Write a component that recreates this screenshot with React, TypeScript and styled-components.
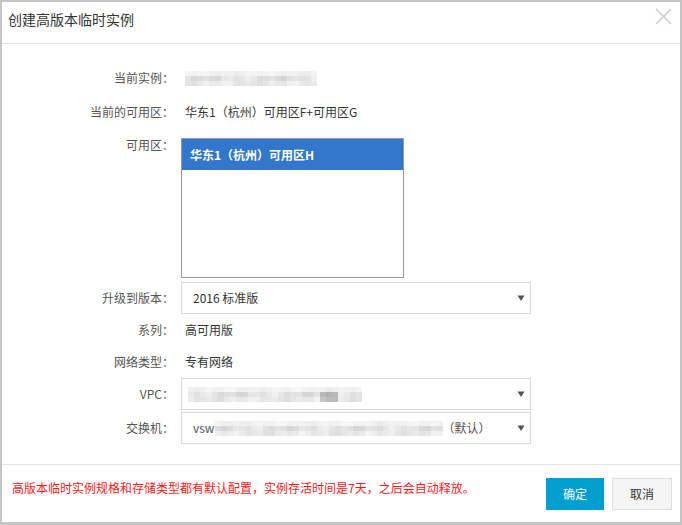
import styled, { createGlobalStyle } from "styled-components";

const GlobalStyle = createGlobalStyle`
    html, body {
        margin: 0;
        padding: 0;
        background: #fff;
    }
    body {
        font-family: "Noto Sans CJK SC", "Liberation Sans", sans-serif;
        font-size: 12px;
        color: #333;
    }
`;

// pixel shades for the masked (blurred) ids
const maskRow = (seed: number, n: number, base: number, spread: number) =>
    Array.from({ length: n }, (_, i) => {
        const v = (Math.sin(seed * 3.1 + i * 1.7) + Math.sin(seed + i * 0.53)) / 4 + 0.5;
        return Math.round(base + v * spread);
    });

function Mosaic({ cells, seed, dark }: { cells: number; seed: number; dark?: number[] }) {
    const rows = [
        maskRow(seed, cells, 236, 12),
        maskRow(seed + 2, cells, 212, 28),
        maskRow(seed + 4, cells, 222, 22),
    ];
    return <MosaicGrid $cells={cells}>
        {rows.flat().map((v, i) => {
            const col = i % cells;
            const shade = dark && dark.includes(col) && i >= cells ? v - 45 : v;
            return <MosaicCell key={i} style={{ background: `rgb(${shade},${shade},${shade})` }} />;
        })}
    </MosaicGrid>;
}

function Caret() {
    return <svg width="8" height="8" viewBox="0 0 8 8">
        <path d="M0.5 1.5 H7.5 L4 7 Z" fill="#555" />
    </svg>;
}

function CloseIcon() {
    return <svg width="17" height="17" viewBox="0 0 17 17">
        <path d="M1 1 L16 16 M16 1 L1 16" stroke="#c9c9c9" strokeWidth="1.4" />
    </svg>;
}

export default function App() {
    return <>
        <GlobalStyle />
        <Dialog>
            <Header>
                <Title>创建高版本临时实例</Title>
                <CloseButton><CloseIcon /></CloseButton>
            </Header>
            <Body>
                <Row $h={32}>
                    <Label>当前实例：</Label>
                    <Value><Mosaic cells={22} seed={1} /></Value>
                </Row>
                <Row $h={32} $mt={2}>
                    <Label>当前的可用区：</Label>
                    <Value>华东1（杭州）可用区F+可用区G</Value>
                </Row>
                <Row $h={140} $mt={10} $top>
                    <Label $top>可用区：</Label>
                    <ListBox>
                        <Option $selected>华东1（杭州）可用区H</Option>
                    </ListBox>
                </Row>
                <Row $h={32} $mt={4}>
                    <Label>升级到版本：</Label>
                    <Select>
                        <SelectText>2016 标准版</SelectText>
                        <Caret />
                    </Select>
                </Row>
                <Row $h={32}>
                    <Label>系列：</Label>
                    <Value>高可用版</Value>
                </Row>
                <Row $h={32}>
                    <Label>网络类型：</Label>
                    <Value>专有网络</Value>
                </Row>
                <Row $h={32}>
                    <Label>VPC：</Label>
                    <Select>
                        <SelectText $pad={6}><Mosaic cells={29} seed={5} dark={[22, 23, 24]} /></SelectText>
                        <Caret />
                    </Select>
                </Row>
                <Row $h={32} $mt={2}>
                    <Label>交换机：</Label>
                    <Select>
                        <SelectText>
                            <Small>vsw</Small>
                            <Mosaic cells={38} seed={9} />
                            <Small>（默认）</Small>
                        </SelectText>
                        <Caret />
                    </Select>
                </Row>
            </Body>
            <Footer>
                <Notice>高版本临时实例规格和存储类型都有默认配置，实例存活时间是7天，之后会自动释放。</Notice>
                <Buttons>
                    <Button $primary>确定</Button>
                    <Button>取消</Button>
                </Buttons>
            </Footer>
        </Dialog>
    </>;
}

const Dialog = styled.div`
    display: flex;
    flex-direction: column;
    box-sizing: border-box;
    width: 682px;
    height: 525px;
    border: 2px solid #c4c4c4;
    border-bottom-width: 3px;
    background: #fff;
`;

const Header = styled.div`
    display: flex;
    align-items: flex-start;
    justify-content: space-between;
    height: 41px;
    border-bottom: 1px solid #e3e3e3;
    padding: 0 8px 0 6px;
`;

const Title = styled.div`
    padding-top: 8px;
    font-size: 14px;
    line-height: 18px;
    color: #333;
`;

const CloseButton = styled.div`
    padding-top: 6px;
    line-height: 0;
`;

const Body = styled.div`
    flex: 1;
    display: flex;
    flex-direction: column;
    padding-top: 18px;
`;

const Row = styled.div<{ $h: number; $mt?: number; $top?: boolean }>`
    display: flex;
    align-items: ${p => (p.$top ? "flex-start" : "center")};
    gap: 7px;
    height: ${p => p.$h}px;
    margin-top: ${p => p.$mt ?? 0}px;
`;

const Label = styled.div<{ $top?: boolean }>`
    width: 172px;
    flex-shrink: 0;
    text-align: right;
    color: #555;
    line-height: 16px;
    margin-top: ${p => (p.$top ? "-1px" : "0")};
`;

const Value = styled.div`
    display: flex;
    align-items: center;
    padding-left: 4px;
    color: #333;
    line-height: 16px;
`;

const MosaicGrid = styled.div<{ $cells: number }>`
    display: grid;
    grid-template-columns: repeat(${p => p.$cells}, 6px);
    grid-auto-rows: 5px;
`;

const MosaicCell = styled.span`
    display: block;
`;

const ListBox = styled.div`
    box-sizing: border-box;
    width: 223px;
    height: 140px;
    border: 1px solid #999;
    background: #fff;
`;

const Option = styled.div<{ $selected?: boolean }>`
    height: 31px;
    line-height: 31px;
    padding-left: 8px;
    font-weight: ${p => (p.$selected ? 700 : 400)};
    color: ${p => (p.$selected ? "#fff" : "#333")};
    background: ${p => (p.$selected ? "#3377cc" : "transparent")};
`;

const Select = styled.div`
    box-sizing: border-box;
    display: flex;
    align-items: center;
    justify-content: space-between;
    width: 350px;
    height: 32px;
    border: 1px solid #d9d9d9;
    padding: 0 5px 0 11px;
    color: #333;
`;

const SelectText = styled.div<{ $pad?: number }>`
    display: flex;
    align-items: center;
    margin-left: ${p => (p.$pad ? p.$pad - 11 : 0)}px;
    line-height: 16px;
`;

const Small = styled.span`
    color: #555;
`;

const Footer = styled.div`
    display: flex;
    align-items: center;
    justify-content: space-between;
    height: 57px;
    border-top: 1px solid #e3e3e3;
    padding: 0 8px 0 10px;
`;

const Notice = styled.div`
    color: #ff1a1a;
    line-height: 16px;
    margin-top: -12px;
`;

const Buttons = styled.div`
    display: flex;
    gap: 8px;
`;

const Button = styled.div<{ $primary?: boolean }>`
    box-sizing: border-box;
    display: flex;
    align-items: center;
    justify-content: center;
    width: ${p => (p.$primary ? "58px" : "60px")};
    height: 32px;
    font-size: 12px;
    color: ${p => (p.$primary ? "#fff" : "#333")};
    background: ${p => (p.$primary ? "#009fcf" : "#f5f5f5")};
    border: 1px solid ${p => (p.$primary ? "#009fcf" : "#dddddd")};
`;
